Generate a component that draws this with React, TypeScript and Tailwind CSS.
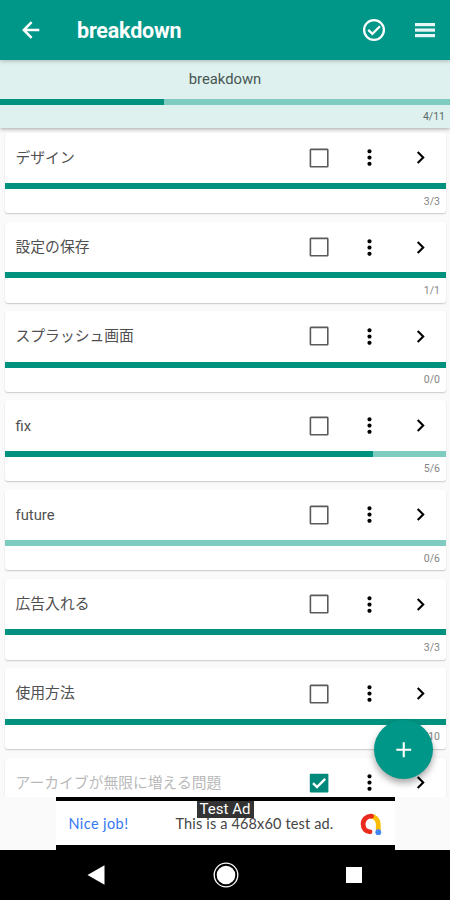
import { MdMoreVert, MdChevronRight, MdAdd } from 'react-icons/md'

type Task = {
  title: string
  done: number
  total: number
  checked?: boolean
}

const tasks: Task[] = [
  { title: 'デザイン', done: 3, total: 3 },
  { title: '設定の保存', done: 1, total: 1 },
  { title: 'スプラッシュ画面', done: 0, total: 0 },
  { title: 'fix', done: 5, total: 6 },
  { title: 'future', done: 0, total: 6 },
  { title: '広告入れる', done: 3, total: 3 },
  { title: '使用方法', done: 10, total: 10 },
  { title: 'アーカイブが無限に増える問題', done: 1, total: 1, checked: true },
]

function Progress({ done, total }: { done: number; total: number }) {
  // an empty task counts as finished
  const percent = total === 0 ? 100 : (done / total) * 100
  return (
    <div className="h-1.5 shrink-0 bg-[#7ecbc0]">
      <div className="h-full bg-[#00917f]" style={{ width: `${percent}%` }} />
    </div>
  )
}

function Checkbox({ checked }: { checked?: boolean }) {
  return (
    <svg viewBox="0 0 20 20" className="size-5" fill="none">
      {checked ? (
        <>
          <rect x="0.8" y="0.8" width="18.6" height="18.6" rx="0.8" fill="#00897b" />
          <path d="M4 10.2 L8 14 L16.2 5.8" stroke="#fff" strokeWidth="2.4" />
        </>
      ) : (
        <rect x="1.4" y="1.4" width="17.4" height="17.4" rx="0.6" stroke="#5a5a5a" strokeWidth="1.6" />
      )}
    </svg>
  )
}

function TaskCard({ title, done, total, checked }: Task) {
  return (
    <li className="flex h-[80.8px] shrink-0 flex-col rounded-[3px] bg-white shadow-[0_1px_1.5px_rgba(0,0,0,0.2)]">
      <div className="flex h-[50.5px] shrink-0 items-center pl-[10.5px] text-black">
        <span className={`flex-1 whitespace-nowrap text-[14.8px] ${checked ? 'text-[#bababa]' : 'text-[#505050]'}`}>
          {title}
        </span>
        <div className="flex w-[51px] justify-center">
          <Checkbox checked={checked} />
        </div>
        <div className="flex w-[51px] justify-center">
          <MdMoreVert className="size-[25px]" />
        </div>
        <div className="flex w-[51px] justify-center">
          <MdChevronRight className="size-[25px]" />
        </div>
      </div>
      <Progress done={done} total={total} />
      <p className="pt-[5.5px] pr-[6px] text-right text-[10.5px] leading-[14px] text-[#858585]">
        {done}/{total}
      </p>
    </li>
  )
}

function BackIcon() {
  return (
    <svg viewBox="0 0 18 18" className="ml-1 size-[18px]" fill="none" stroke="#fff" strokeWidth="2.5">
      <path d="M17.3 9 H2" />
      <path d="M9.6 1.2 L1.8 9 L9.6 16.8" />
    </svg>
  )
}

function DoneIcon() {
  return (
    <svg viewBox="0 0 24 24" className="size-6" fill="none" stroke="#fff" strokeWidth="2.3">
      <circle cx="12" cy="12" r="9.9" />
      <path d="M6.2 11.8 L10.4 15.8 L18 8.2" />
    </svg>
  )
}

function MenuIcon() {
  return (
    <svg viewBox="0 0 20 16" className="ml-[29px] h-4 w-5" fill="#e9f6f5">
      <rect y="1" width="20" height="3.2" />
      <rect y="6.5" width="20" height="3.2" />
      <rect y="12" width="20" height="3.2" />
    </svg>
  )
}

function AdMobLogo() {
  return (
    <svg viewBox="0 0 24 24" className="size-6" fill="none" strokeWidth="4.8">
      <path d="M11.5 4.2 A8 8 0 0 1 19.3 12 V19.5" stroke="#fbbc04" />
      <path d="M12.5 4.2 A7.9 7.9 0 0 0 4.1 12 C4.1 16.6 7 19.8 11 19.8" stroke="#ea2a1c" strokeLinecap="round" />
      <circle cx="19.3" cy="20.2" r="2.9" fill="#4285f4" />
    </svg>
  )
}

function AdBanner() {
  return (
    <div className="flex h-[53px] shrink-0 justify-center bg-[#fafafa]">
      <div className="relative h-full w-[339px] border-t-[4px] border-b-[5px] border-black bg-white">
        <div className="flex h-full items-center whitespace-nowrap pt-px pr-3 pl-[13px] font-['Lato','Liberation_Sans',sans-serif] text-[14.5px]">
          <span className="w-[107px] tracking-[0.4px] text-[#3478f6]">Nice job!</span>
          <span className="flex-1 tracking-[0.15px] text-[#444]">This is a 468x60 test ad.</span>
          <AdMobLogo />
        </div>
        <span className="absolute top-0 left-[141px] h-[17px] w-[57px] whitespace-nowrap bg-[#333] text-center text-[15px] leading-[17px] text-white">
          Test Ad
        </span>
      </div>
    </div>
  )
}

function NavBar() {
  return (
    <nav className="flex h-[50px] shrink-0 items-center justify-between bg-black pr-[88px] pl-[87px]">
      <svg viewBox="0 0 18 20" className="h-5 w-[18px]" fill="#fff">
        <path d="M17.5 0.3 V19.7 L0.5 10 Z" />
      </svg>
      <svg viewBox="0 0 26 26" className="size-[26px]">
        <circle cx="13" cy="13" r="11.8" fill="none" stroke="#fff" strokeWidth="1.3" />
        <circle cx="13" cy="13" r="9.3" fill="#fff" />
      </svg>
      <div className="size-4 bg-white" />
    </nav>
  )
}

export default function App() {
  return (
    <div className="relative flex h-[900px] w-[450px] flex-col overflow-hidden bg-[#fafafa] font-['Roboto','Noto_Sans_CJK_JP',sans-serif]">
      <header className="z-20 flex h-[60px] shrink-0 items-center bg-[#009688] pr-[15px] pl-[17.5px] text-white shadow-[0_1px_4px_rgba(0,0,0,0.25)]">
        <BackIcon />
        <h1 className="ml-[37.5px] flex-1 pt-[3px] text-[21.5px] font-bold tracking-[-0.2px]">breakdown</h1>
        <DoneIcon />
        <MenuIcon />
      </header>

      {/* Overall progress */}
      <section className="z-10 flex h-[68px] shrink-0 flex-col bg-[#dff1ee] shadow-[0_1px_4px_rgba(0,0,0,0.35)]">
        <p className="h-[38.5px] text-center text-[14.8px] leading-[38px] text-[#485653]">breakdown</p>
        <Progress done={4} total={11} />
        <p className="pt-[5px] pr-[5px] text-right text-[10.5px] leading-[14px] text-[#5c6a67]">4/11</p>
      </section>

      <ul className="flex min-h-0 flex-1 flex-col gap-[8.5px] overflow-hidden pt-[4.5px] pr-[4px] pl-[5px]">
        {tasks.map((task) => (
          <TaskCard key={task.title} {...task} />
        ))}
      </ul>

      <AdBanner />
      <NavBar />

      {/* Add button floats over the list */}
      <button className="absolute top-[720px] left-[374px] z-20 flex size-[59px] items-center justify-center rounded-full bg-[#009688] text-white shadow-[0_4px_7px_rgba(0,0,0,0.35)]">
        <MdAdd className="size-[25.5px]" />
      </button>
    </div>
  )
}
